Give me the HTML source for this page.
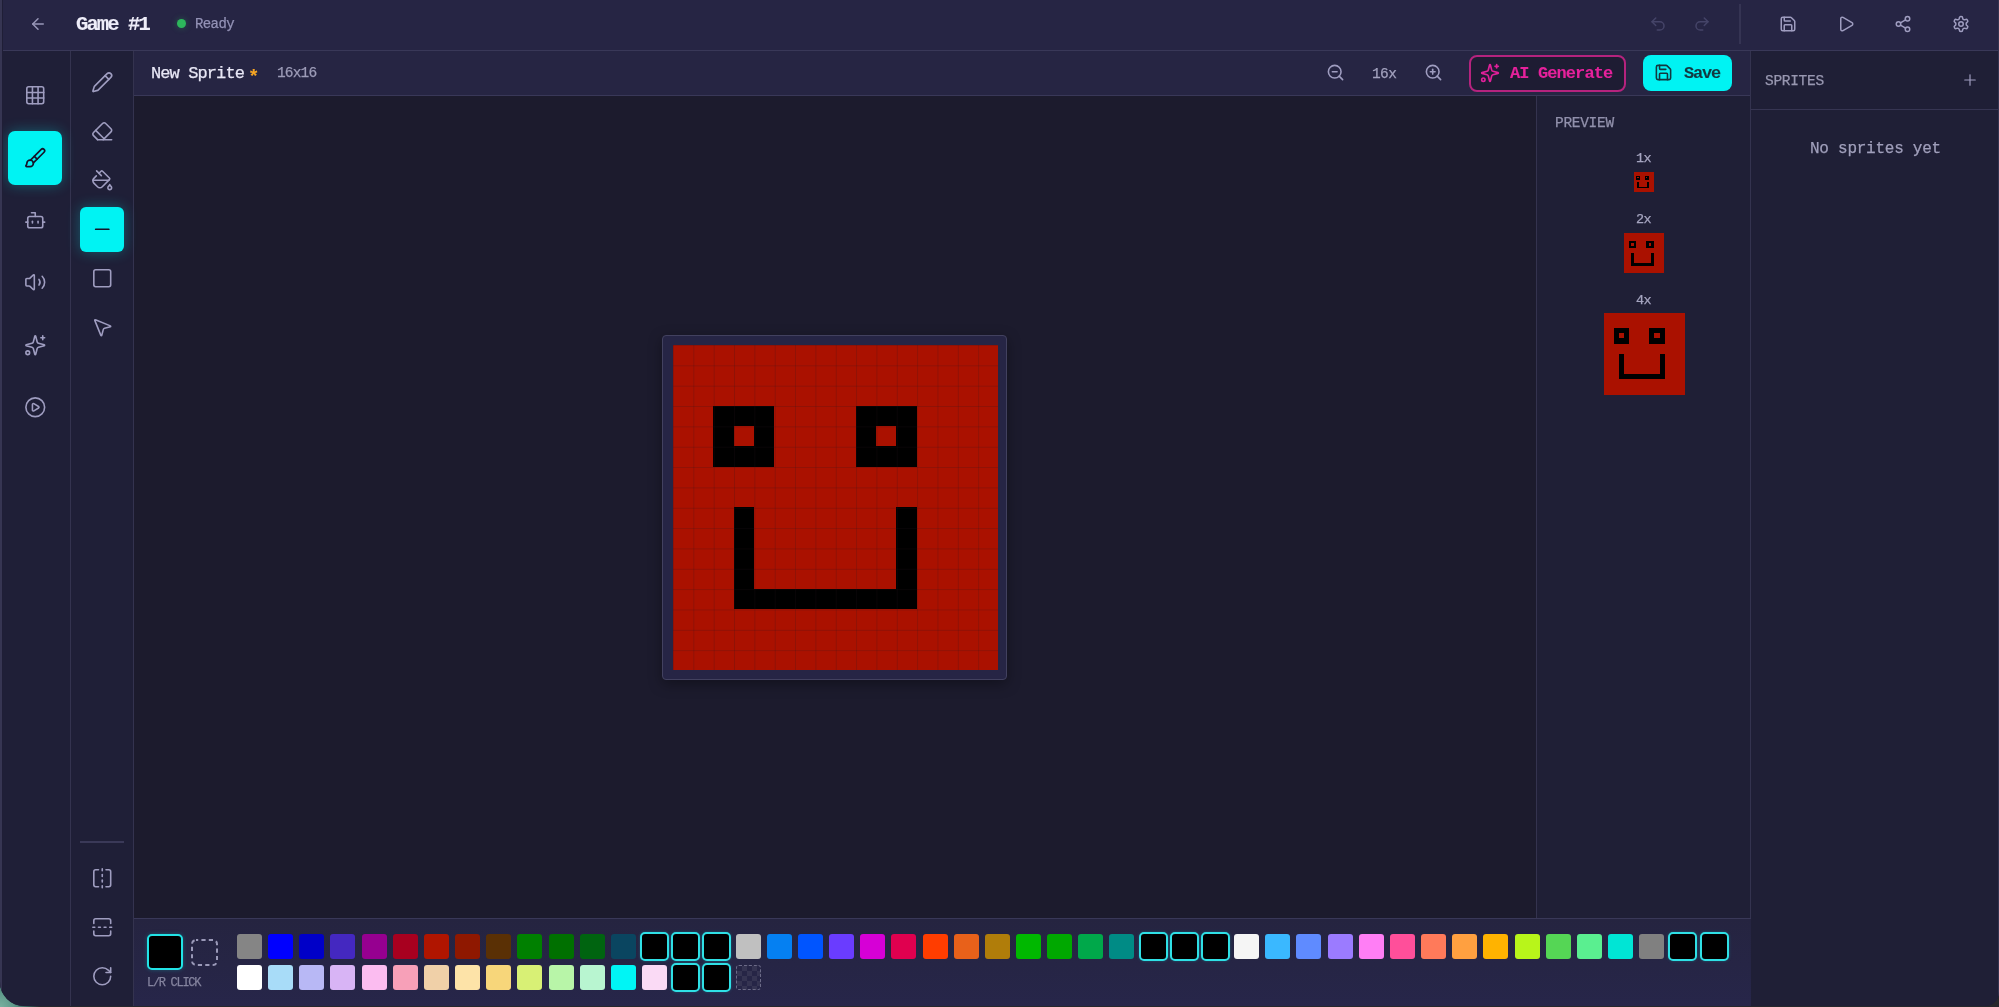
<!DOCTYPE html>
<html><head><meta charset="utf-8">
<style>
*{box-sizing:border-box;margin:0;padding:0}
html,body{width:1999px;height:1007px;overflow:hidden;background:#26272b}
#wall{left:0;top:940px;width:40px;height:67px;background:radial-gradient(circle at 0 100%,#78b09f 0,#5e998a 14px,#2f514d 30px,#26272b 40px)}
body{font-family:"Liberation Mono",monospace;position:relative}
.a{position:absolute}
svg.i{position:absolute;fill:none;stroke:currentColor;stroke-linecap:round;stroke-linejoin:round;stroke-width:2;overflow:visible}
.t{position:absolute;white-space:pre;line-height:1;will-change:transform}
#win{left:0;top:0;width:1999px;height:1006px;background:#1f1f37;border-radius:0 0 14px 24px;overflow:hidden}
#top{left:0;top:0;width:1999px;height:51px;background:#262544;border-bottom:1px solid #393858}
#side1{left:0;top:51px;width:71px;height:960px;background:#1f1f37;border-right:1px solid #34334f}
#side2{left:71px;top:51px;width:63px;height:960px;background:#1f1f37;border-right:1px solid #34334f}
#hdr{left:134px;top:51px;width:1617px;height:45px;background:#262543;border-bottom:1px solid #393858}
#canvas{left:134px;top:96px;width:1402px;height:822px;background:#1c1b2d}
#preview{left:1536px;top:96px;width:215px;height:822px;background:#1f1f36;border-left:1px solid #34334f}
#right{left:1750px;top:51px;width:249px;height:960px;background:#1f1f36;border-left:1px solid #34334f}
#pal{left:134px;top:918px;width:1617px;height:92px;background:linear-gradient(#252440,#27264a);border-top:1px solid #393858}
.sw{position:absolute;width:25px;height:25px;border-radius:3px}
.sel{outline:none;border:2px solid #2fe0e6;box-shadow:0 0 3px rgba(0,240,240,.25)}
</style></head><body>
<div id="wall" class="a"></div>
<div id="win" class="a">
<div id="top" class="a"></div>
<div id="side1" class="a"></div>
<div id="side2" class="a"></div>
<div id="hdr" class="a"></div>
<div id="canvas" class="a"></div>
<div id="preview" class="a"></div>
<div id="right" class="a"></div>
<div id="pal" class="a"></div>

<svg class="i" style="left:28.50px;top:14.50px;width:18px;height:18px;color:#9897b8;stroke-width:2" viewBox="0 0 24 24"><path d="m12 19-7-7 7-7"/><path d="M19 12H5"/></svg>
<div class="t " style="left:76.30px;top:14.59px;font-size:20.5px;color:#eeedf9;font-weight:700;letter-spacing:-1.9px;-webkit-text-stroke:0.1px #eeedf9">Game #1</div>
<div class="a" style="left:176.5px;top:18.5px;width:9px;height:9px;border-radius:50%;background:#2db75c;box-shadow:0 0 6px rgba(46,197,94,.35)"></div>
<div class="t " style="left:194.60px;top:16.87px;font-size:14px;color:#9392b6;font-weight:400;letter-spacing:-0.6px;-webkit-text-stroke:0.25px #9392b6">Ready</div>
<svg class="i" style="left:1648.50px;top:14.50px;width:18px;height:18px;color:#454468;stroke-width:2" viewBox="0 0 24 24"><path d="M9 14 4 9l5-5"/><path d="M4 9h10.5a5.5 5.5 0 0 1 5.5 5.5a5.5 5.5 0 0 1-5.5 5.5H11"/></svg>
<svg class="i" style="left:1692.50px;top:14.50px;width:18px;height:18px;color:#454468;stroke-width:2" viewBox="0 0 24 24"><path d="m15 14 5-5-5-5"/><path d="M20 9H9.5A5.5 5.5 0 0 0 4 14.5A5.5 5.5 0 0 0 9.5 20H13"/></svg>
<div class="a" style="left:1739px;top:4px;width:1.5px;height:40px;background:#353453"></div>
<svg class="i" style="left:1778.50px;top:14.50px;width:18px;height:18px;color:#9f9dc0;stroke-width:2" viewBox="0 0 24 24"><path d="M15.2 3a2 2 0 0 1 1.4.6l3.8 3.8a2 2 0 0 1 .6 1.4V19a2 2 0 0 1-2 2H5a2 2 0 0 1-2-2V5a2 2 0 0 1 2-2z"/><path d="M17 21v-7a1 1 0 0 0-1-1H8a1 1 0 0 0-1 1v7"/><path d="M7 3v4a1 1 0 0 0 1 1h7"/></svg>
<svg class="i" style="left:1836.50px;top:14.50px;width:18px;height:18px;color:#9f9dc0;stroke-width:2" viewBox="0 0 24 24"><path d="M5 5a2 2 0 0 1 3.008-1.728l11.997 6.998a2 2 0 0 1 .003 3.458l-12 7A2 2 0 0 1 5 19z"/></svg>
<svg class="i" style="left:1894.00px;top:14.50px;width:18px;height:18px;color:#9f9dc0;stroke-width:2" viewBox="0 0 24 24"><circle cx="18" cy="5" r="3"/><circle cx="6" cy="12" r="3"/><circle cx="18" cy="19" r="3"/><line x1="8.59" x2="15.42" y1="13.51" y2="17.49"/><line x1="15.41" x2="8.59" y1="6.51" y2="10.49"/></svg>
<svg class="i" style="left:1952.00px;top:14.50px;width:18px;height:18px;color:#9f9dc0;stroke-width:2" viewBox="0 0 24 24"><path d="M12.22 2h-.44a2 2 0 0 0-2 2v.18a2 2 0 0 1-1 1.73l-.43.25a2 2 0 0 1-2 0l-.15-.08a2 2 0 0 0-2.73.73l-.22.38a2 2 0 0 0 .73 2.73l.15.1a2 2 0 0 1 1 1.72v.51a2 2 0 0 1-1 1.74l-.15.09a2 2 0 0 0-.73 2.73l.22.38a2 2 0 0 0 2.73.73l.15-.08a2 2 0 0 1 2 0l.43.25a2 2 0 0 1 1 1.73V20a2 2 0 0 0 2 2h.44a2 2 0 0 0 2-2v-.18a2 2 0 0 1 1-1.73l.43-.25a2 2 0 0 1 2 0l.15.08a2 2 0 0 0 2.73-.73l.22-.39a2 2 0 0 0-.73-2.73l-.15-.08a2 2 0 0 1-1-1.74v-.5a2 2 0 0 1 1-1.74l.15-.09a2 2 0 0 0 .73-2.73l-.22-.38a2 2 0 0 0-2.73-.73l-.15.08a2 2 0 0 1-2 0l-.43-.25a2 2 0 0 1-1-1.73V4a2 2 0 0 0-2-2z"/><circle cx="12" cy="12" r="3"/></svg>
<div class="a" style="left:8px;top:131px;width:54px;height:54px;border-radius:7px;background:#00f3f3;box-shadow:0 0 14px rgba(0,240,240,.3)"></div>
<svg class="i" style="left:23.75px;top:84.25px;width:22.5px;height:22.5px;color:#9f9dc0;stroke-width:1.7" viewBox="0 0 24 24"><rect width="18" height="18" x="3" y="3" rx="2"/><path d="M3 9h18"/><path d="M3 15h18"/><path d="M9 3v18"/><path d="M15 3v18"/></svg>
<svg class="i" style="left:23.75px;top:146.75px;width:22.5px;height:22.5px;color:#15152a;stroke-width:1.8" viewBox="0 0 24 24"><path d="m11 10 3 3"/><path d="M6.5 21A3.5 3.5 0 1 0 3 17.5a2.62 2.62 0 0 1-.708 1.792A1 1 0 0 0 3 21z"/><path d="M9.969 17.031 21.378 5.624a1 1 0 0 0-3.002-3.002L6.967 14.031"/></svg>
<svg class="i" style="left:23.75px;top:209.15px;width:22.5px;height:22.5px;color:#9f9dc0;stroke-width:1.7" viewBox="0 0 24 24"><path d="M12 8V4H8"/><rect width="16" height="12" x="4" y="8" rx="2"/><path d="M2 14h2"/><path d="M20 14h2"/><path d="M15 13v2"/><path d="M9 13v2"/></svg>
<svg class="i" style="left:23.75px;top:270.75px;width:22.5px;height:22.5px;color:#9f9dc0;stroke-width:1.7" viewBox="0 0 24 24"><path d="M11 4.702a.705.705 0 0 0-1.203-.498L6.413 7.587A1.4 1.4 0 0 1 5.416 8H3a1 1 0 0 0-1 1v6a1 1 0 0 0 1 1h2.416a1.4 1.4 0 0 1 .997.413l3.383 3.384A.705.705 0 0 0 11 19.298z"/><path d="M16 9a5 5 0 0 1 0 6"/><path d="M19.364 18.364a9 9 0 0 0 0-12.728"/></svg>
<svg class="i" style="left:23.75px;top:333.75px;width:22.5px;height:22.5px;color:#9f9dc0;stroke-width:1.7" viewBox="0 0 24 24"><path d="M9.937 15.5A2 2 0 0 0 8.5 14.063l-6.135-1.582a.5.5 0 0 1 0-.962L8.5 9.936A2 2 0 0 0 9.937 8.5l1.582-6.135a.5.5 0 0 1 .963 0L14.063 8.5A2 2 0 0 0 15.5 9.937l6.135 1.581a.5.5 0 0 1 0 .964L15.5 14.063a2 2 0 0 0-1.437 1.437l-1.582 6.135a.5.5 0 0 1-.963 0z"/><path d="M20 2v4"/><path d="M22 4h-4"/><circle cx="4" cy="20" r="2"/></svg>
<svg class="i" style="left:23.75px;top:396.25px;width:22.5px;height:22.5px;color:#9f9dc0;stroke-width:1.7" viewBox="0 0 24 24"><circle cx="12" cy="12" r="10"/><path d="M9 9.003a1 1 0 0 1 1.517-.859l4.997 2.997a1 1 0 0 1 0 1.718l-4.997 2.997A1 1 0 0 1 9 14.996z"/></svg>
<div class="a" style="left:80px;top:207px;width:44px;height:45px;border-radius:6px;background:#00f3f3;box-shadow:0 0 14px rgba(0,240,240,.3)"></div>
<svg class="i" style="left:90.75px;top:70.75px;width:22.5px;height:22.5px;color:#9f9dc0;stroke-width:1.7" viewBox="0 0 24 24"><path d="M21.174 6.812a1 1 0 0 0-3.986-3.987L3.842 16.174a2 2 0 0 0-.5.83l-1.321 4.352a.5.5 0 0 0 .623.622l4.353-1.32a2 2 0 0 0 .83-.497z"/><path d="m15 5 4 4"/></svg>
<svg class="i" style="left:90.75px;top:120.25px;width:22.5px;height:22.5px;color:#9f9dc0;stroke-width:1.7" viewBox="0 0 24 24"><path d="m7 21-4.3-4.3c-1-1-1-2.5 0-3.4l9.6-9.6c1-1 2.5-1 3.4 0l5.6 5.6c1 1 1 2.5 0 3.4L13 21"/><path d="M22 21H7"/><path d="m5 11 9 9"/></svg>
<svg class="i" style="left:90.75px;top:168.75px;width:22.5px;height:22.5px;color:#9f9dc0;stroke-width:1.7" viewBox="0 0 24 24"><path d="M11 7 6 2"/><path d="M18.992 12H2.041"/><path d="M21.145 18.38A3.34 3.34 0 0 1 20 16.5a3.3 3.3 0 0 1-1.145 1.88c-.575.46-.855 1.02-.855 1.595A2 2 0 0 0 20 22a2 2 0 0 0 2-2.025c0-.58-.285-1.13-.855-1.595"/><path d="m8.5 4.5 2.148-2.148a1.205 1.205 0 0 1 1.704 0l7.296 7.296a1.205 1.205 0 0 1 0 1.704l-7.592 7.592a3.615 3.615 0 0 1-5.112 0l-3.888-3.888a3.615 3.615 0 0 1 0-5.112L5.67 7.33"/></svg>
<svg class="i" style="left:90.75px;top:218.25px;width:22.5px;height:22.5px;color:#15152a;stroke-width:1.8" viewBox="0 0 24 24"><path d="M5 12h14"/></svg>
<svg class="i" style="left:90.75px;top:266.75px;width:22.5px;height:22.5px;color:#9f9dc0;stroke-width:1.7" viewBox="0 0 24 24"><rect width="18" height="18" x="3" y="3" rx="2"/></svg>
<svg class="i" style="left:90.75px;top:315.75px;width:22.5px;height:22.5px;color:#9f9dc0;stroke-width:1.7" viewBox="0 0 24 24"><path d="M4.037 4.688a.495.495 0 0 1 .651-.651l16 6.5a.5.5 0 0 1-.063.947l-6.124 1.58a2 2 0 0 0-1.438 1.435l-1.579 6.126a.5.5 0 0 1-.947.063z"/></svg>
<div class="a" style="left:80px;top:841px;width:44px;height:2px;background:#3a3958"></div>
<svg class="i" style="left:90.75px;top:867.25px;width:22.5px;height:22.5px;color:#9f9dc0;stroke-width:1.7" viewBox="0 0 24 24"><path d="M8 3H5a2 2 0 0 0-2 2v14c0 1.1.9 2 2 2h3"/><path d="M16 3h3a2 2 0 0 1 2 2v14a2 2 0 0 1-2 2h-3"/><path d="M12 20v2"/><path d="M12 14v2"/><path d="M12 8v2"/><path d="M12 2v2"/></svg>
<svg class="i" style="left:90.75px;top:915.75px;width:22.5px;height:22.5px;color:#9f9dc0;stroke-width:1.7" viewBox="0 0 24 24"><path d="M21 8V5a2 2 0 0 0-2-2H5a2 2 0 0 0-2 2v3"/><path d="M21 16v3a2 2 0 0 1-2 2H5a2 2 0 0 1-2-2v-3"/><path d="M4 12H2"/><path d="M10 12H8"/><path d="M16 12h-2"/><path d="M22 12h-2"/></svg>
<svg class="i" style="left:90.75px;top:964.75px;width:22.5px;height:22.5px;color:#9f9dc0;stroke-width:1.7" viewBox="0 0 24 24"><path d="M21 12a9 9 0 1 1-9-9c2.52 0 4.93 1 6.74 2.74L21 8"/><path d="M21 3v5h-5"/></svg>
<div class="t " style="left:151.00px;top:64.78px;font-size:17px;color:#e8e7f6;font-weight:400;letter-spacing:-0.9px;-webkit-text-stroke:0.25px #e8e7f6">New Sprite</div>
<div class="t " style="left:248.00px;top:67.94px;font-size:19px;color:#f5a524;font-weight:700;letter-spacing:0px;-webkit-text-stroke:0.1px #f5a524">*</div>
<div class="t " style="left:277.00px;top:66.39px;font-size:14.5px;color:#9d9cb8;font-weight:400;letter-spacing:-0.85px;-webkit-text-stroke:0.25px #9d9cb8">16x16</div>
<svg class="i" style="left:1325.50px;top:63.00px;width:19px;height:19px;color:#9f9dc0;stroke-width:2" viewBox="0 0 24 24"><circle cx="11" cy="11" r="8"/><line x1="21" x2="16.65" y1="21" y2="16.65"/><line x1="8" x2="14" y1="11" y2="11"/></svg>
<div class="t " style="left:1372.00px;top:66.69px;font-size:14.5px;color:#a2a1bd;font-weight:400;letter-spacing:-0.6px;-webkit-text-stroke:0.25px #a2a1bd">16x</div>
<svg class="i" style="left:1424.00px;top:63.00px;width:19px;height:19px;color:#9f9dc0;stroke-width:2" viewBox="0 0 24 24"><circle cx="11" cy="11" r="8"/><line x1="21" x2="16.65" y1="21" y2="16.65"/><line x1="11" x2="11" y1="8" y2="14"/><line x1="8" x2="14" y1="11" y2="11"/></svg>
<div class="a" style="left:1469px;top:55px;width:157px;height:37px;border-radius:8px;background:#1e1c33;border:2px solid #b5237e"></div>
<svg class="i" style="left:1480.00px;top:62.50px;width:20px;height:20px;color:#e0209a;stroke-width:2" viewBox="0 0 24 24"><path d="M9.937 15.5A2 2 0 0 0 8.5 14.063l-6.135-1.582a.5.5 0 0 1 0-.962L8.5 9.936A2 2 0 0 0 9.937 8.5l1.582-6.135a.5.5 0 0 1 .963 0L14.063 8.5A2 2 0 0 0 15.5 9.937l6.135 1.581a.5.5 0 0 1 0 .964L15.5 14.063a2 2 0 0 0-1.437 1.437l-1.582 6.135a.5.5 0 0 1-.963 0z"/><path d="M20 2v4"/><path d="M22 4h-4"/><circle cx="4" cy="20" r="2"/></svg>
<div class="t " style="left:1510.00px;top:64.88px;font-size:17px;color:#e6219c;font-weight:700;letter-spacing:-0.9px;-webkit-text-stroke:0.1px #e6219c">AI Generate</div>
<div class="a" style="left:1643px;top:55px;width:89px;height:36px;border-radius:8px;background:#00f3f3"></div>
<svg class="i" style="left:1653.50px;top:63.00px;width:19px;height:19px;color:#133840;stroke-width:2" viewBox="0 0 24 24"><path d="M15.2 3a2 2 0 0 1 1.4.6l3.8 3.8a2 2 0 0 1 .6 1.4V19a2 2 0 0 1-2 2H5a2 2 0 0 1-2-2V5a2 2 0 0 1 2-2z"/><path d="M17 21v-7a1 1 0 0 0-1-1H8a1 1 0 0 0-1 1v7"/><path d="M7 3v4a1 1 0 0 0 1 1h7"/></svg>
<div class="t " style="left:1683.50px;top:64.88px;font-size:17px;color:#133840;font-weight:700;letter-spacing:-1.2px;-webkit-text-stroke:0.1px #133840">Save</div>
<div class="a" style="left:662px;top:335px;width:345px;height:345px;border-radius:4px;background:#262545;border:1px solid #42415f;box-shadow:0 4px 14px rgba(0,0,0,.35)"></div>
<div class="a" style="left:672.5px;top:344.5px;width:325.5px;height:325.5px;background:#aa1100;overflow:hidden"><div class="a" style="left:40.688px;top:61.031px;width:20.364px;height:20.364px;background:#000"></div><div class="a" style="left:40.688px;top:81.375px;width:20.364px;height:20.364px;background:#000"></div><div class="a" style="left:40.688px;top:101.719px;width:20.364px;height:20.364px;background:#000"></div><div class="a" style="left:61.031px;top:61.031px;width:20.364px;height:20.364px;background:#000"></div><div class="a" style="left:61.031px;top:101.719px;width:20.364px;height:20.364px;background:#000"></div><div class="a" style="left:61.031px;top:162.750px;width:20.364px;height:20.364px;background:#000"></div><div class="a" style="left:61.031px;top:183.094px;width:20.364px;height:20.364px;background:#000"></div><div class="a" style="left:61.031px;top:203.438px;width:20.364px;height:20.364px;background:#000"></div><div class="a" style="left:61.031px;top:223.781px;width:20.364px;height:20.364px;background:#000"></div><div class="a" style="left:61.031px;top:244.125px;width:20.364px;height:20.364px;background:#000"></div><div class="a" style="left:81.375px;top:61.031px;width:20.364px;height:20.364px;background:#000"></div><div class="a" style="left:81.375px;top:81.375px;width:20.364px;height:20.364px;background:#000"></div><div class="a" style="left:81.375px;top:101.719px;width:20.364px;height:20.364px;background:#000"></div><div class="a" style="left:81.375px;top:244.125px;width:20.364px;height:20.364px;background:#000"></div><div class="a" style="left:101.719px;top:244.125px;width:20.364px;height:20.364px;background:#000"></div><div class="a" style="left:122.062px;top:244.125px;width:20.364px;height:20.364px;background:#000"></div><div class="a" style="left:142.406px;top:244.125px;width:20.364px;height:20.364px;background:#000"></div><div class="a" style="left:162.750px;top:244.125px;width:20.364px;height:20.364px;background:#000"></div><div class="a" style="left:183.094px;top:61.031px;width:20.364px;height:20.364px;background:#000"></div><div class="a" style="left:183.094px;top:81.375px;width:20.364px;height:20.364px;background:#000"></div><div class="a" style="left:183.094px;top:101.719px;width:20.364px;height:20.364px;background:#000"></div><div class="a" style="left:183.094px;top:244.125px;width:20.364px;height:20.364px;background:#000"></div><div class="a" style="left:203.438px;top:61.031px;width:20.364px;height:20.364px;background:#000"></div><div class="a" style="left:203.438px;top:101.719px;width:20.364px;height:20.364px;background:#000"></div><div class="a" style="left:203.438px;top:244.125px;width:20.364px;height:20.364px;background:#000"></div><div class="a" style="left:223.781px;top:61.031px;width:20.364px;height:20.364px;background:#000"></div><div class="a" style="left:223.781px;top:81.375px;width:20.364px;height:20.364px;background:#000"></div><div class="a" style="left:223.781px;top:101.719px;width:20.364px;height:20.364px;background:#000"></div><div class="a" style="left:223.781px;top:162.750px;width:20.364px;height:20.364px;background:#000"></div><div class="a" style="left:223.781px;top:183.094px;width:20.364px;height:20.364px;background:#000"></div><div class="a" style="left:223.781px;top:203.438px;width:20.364px;height:20.364px;background:#000"></div><div class="a" style="left:223.781px;top:223.781px;width:20.364px;height:20.364px;background:#000"></div><div class="a" style="left:223.781px;top:244.125px;width:20.364px;height:20.364px;background:#000"></div><div class="a" style="left:0;top:0;width:325.5px;height:325.5px;background-image:linear-gradient(to right, rgba(40,20,30,.2) 1px, transparent 1px),linear-gradient(to bottom, rgba(40,20,30,.2) 1px, transparent 1px);background-size:20.34375px 20.34375px"></div></div>
<div class="t " style="left:1555.00px;top:116.19px;font-size:14.5px;color:#9291ac;font-weight:400;letter-spacing:-0.3px;-webkit-text-stroke:0.25px #9291ac">PREVIEW</div>
<div class="t " style="left:1636.00px;top:152.16px;font-size:13.5px;color:#a6a5c0;font-weight:400;letter-spacing:-0.6px;-webkit-text-stroke:0.25px #a6a5c0">1x</div>
<div class="a" style="left:1633.5px;top:172px;width:20px;height:20px;background:#aa1100;overflow:hidden"><div class="a" style="left:2.500px;top:3.750px;width:1.270px;height:1.270px;background:#000"></div><div class="a" style="left:2.500px;top:5.000px;width:1.270px;height:1.270px;background:#000"></div><div class="a" style="left:2.500px;top:6.250px;width:1.270px;height:1.270px;background:#000"></div><div class="a" style="left:3.750px;top:3.750px;width:1.270px;height:1.270px;background:#000"></div><div class="a" style="left:3.750px;top:6.250px;width:1.270px;height:1.270px;background:#000"></div><div class="a" style="left:3.750px;top:10.000px;width:1.270px;height:1.270px;background:#000"></div><div class="a" style="left:3.750px;top:11.250px;width:1.270px;height:1.270px;background:#000"></div><div class="a" style="left:3.750px;top:12.500px;width:1.270px;height:1.270px;background:#000"></div><div class="a" style="left:3.750px;top:13.750px;width:1.270px;height:1.270px;background:#000"></div><div class="a" style="left:3.750px;top:15.000px;width:1.270px;height:1.270px;background:#000"></div><div class="a" style="left:5.000px;top:3.750px;width:1.270px;height:1.270px;background:#000"></div><div class="a" style="left:5.000px;top:5.000px;width:1.270px;height:1.270px;background:#000"></div><div class="a" style="left:5.000px;top:6.250px;width:1.270px;height:1.270px;background:#000"></div><div class="a" style="left:5.000px;top:15.000px;width:1.270px;height:1.270px;background:#000"></div><div class="a" style="left:6.250px;top:15.000px;width:1.270px;height:1.270px;background:#000"></div><div class="a" style="left:7.500px;top:15.000px;width:1.270px;height:1.270px;background:#000"></div><div class="a" style="left:8.750px;top:15.000px;width:1.270px;height:1.270px;background:#000"></div><div class="a" style="left:10.000px;top:15.000px;width:1.270px;height:1.270px;background:#000"></div><div class="a" style="left:11.250px;top:3.750px;width:1.270px;height:1.270px;background:#000"></div><div class="a" style="left:11.250px;top:5.000px;width:1.270px;height:1.270px;background:#000"></div><div class="a" style="left:11.250px;top:6.250px;width:1.270px;height:1.270px;background:#000"></div><div class="a" style="left:11.250px;top:15.000px;width:1.270px;height:1.270px;background:#000"></div><div class="a" style="left:12.500px;top:3.750px;width:1.270px;height:1.270px;background:#000"></div><div class="a" style="left:12.500px;top:6.250px;width:1.270px;height:1.270px;background:#000"></div><div class="a" style="left:12.500px;top:15.000px;width:1.270px;height:1.270px;background:#000"></div><div class="a" style="left:13.750px;top:3.750px;width:1.270px;height:1.270px;background:#000"></div><div class="a" style="left:13.750px;top:5.000px;width:1.270px;height:1.270px;background:#000"></div><div class="a" style="left:13.750px;top:6.250px;width:1.270px;height:1.270px;background:#000"></div><div class="a" style="left:13.750px;top:10.000px;width:1.270px;height:1.270px;background:#000"></div><div class="a" style="left:13.750px;top:11.250px;width:1.270px;height:1.270px;background:#000"></div><div class="a" style="left:13.750px;top:12.500px;width:1.270px;height:1.270px;background:#000"></div><div class="a" style="left:13.750px;top:13.750px;width:1.270px;height:1.270px;background:#000"></div><div class="a" style="left:13.750px;top:15.000px;width:1.270px;height:1.270px;background:#000"></div></div>
<div class="t " style="left:1636.00px;top:212.96px;font-size:13.5px;color:#a6a5c0;font-weight:400;letter-spacing:-0.6px;-webkit-text-stroke:0.25px #a6a5c0">2x</div>
<div class="a" style="left:1623.5px;top:233px;width:40px;height:40px;background:#aa1100;overflow:hidden"><div class="a" style="left:5.000px;top:7.500px;width:2.520px;height:2.520px;background:#000"></div><div class="a" style="left:5.000px;top:10.000px;width:2.520px;height:2.520px;background:#000"></div><div class="a" style="left:5.000px;top:12.500px;width:2.520px;height:2.520px;background:#000"></div><div class="a" style="left:7.500px;top:7.500px;width:2.520px;height:2.520px;background:#000"></div><div class="a" style="left:7.500px;top:12.500px;width:2.520px;height:2.520px;background:#000"></div><div class="a" style="left:7.500px;top:20.000px;width:2.520px;height:2.520px;background:#000"></div><div class="a" style="left:7.500px;top:22.500px;width:2.520px;height:2.520px;background:#000"></div><div class="a" style="left:7.500px;top:25.000px;width:2.520px;height:2.520px;background:#000"></div><div class="a" style="left:7.500px;top:27.500px;width:2.520px;height:2.520px;background:#000"></div><div class="a" style="left:7.500px;top:30.000px;width:2.520px;height:2.520px;background:#000"></div><div class="a" style="left:10.000px;top:7.500px;width:2.520px;height:2.520px;background:#000"></div><div class="a" style="left:10.000px;top:10.000px;width:2.520px;height:2.520px;background:#000"></div><div class="a" style="left:10.000px;top:12.500px;width:2.520px;height:2.520px;background:#000"></div><div class="a" style="left:10.000px;top:30.000px;width:2.520px;height:2.520px;background:#000"></div><div class="a" style="left:12.500px;top:30.000px;width:2.520px;height:2.520px;background:#000"></div><div class="a" style="left:15.000px;top:30.000px;width:2.520px;height:2.520px;background:#000"></div><div class="a" style="left:17.500px;top:30.000px;width:2.520px;height:2.520px;background:#000"></div><div class="a" style="left:20.000px;top:30.000px;width:2.520px;height:2.520px;background:#000"></div><div class="a" style="left:22.500px;top:7.500px;width:2.520px;height:2.520px;background:#000"></div><div class="a" style="left:22.500px;top:10.000px;width:2.520px;height:2.520px;background:#000"></div><div class="a" style="left:22.500px;top:12.500px;width:2.520px;height:2.520px;background:#000"></div><div class="a" style="left:22.500px;top:30.000px;width:2.520px;height:2.520px;background:#000"></div><div class="a" style="left:25.000px;top:7.500px;width:2.520px;height:2.520px;background:#000"></div><div class="a" style="left:25.000px;top:12.500px;width:2.520px;height:2.520px;background:#000"></div><div class="a" style="left:25.000px;top:30.000px;width:2.520px;height:2.520px;background:#000"></div><div class="a" style="left:27.500px;top:7.500px;width:2.520px;height:2.520px;background:#000"></div><div class="a" style="left:27.500px;top:10.000px;width:2.520px;height:2.520px;background:#000"></div><div class="a" style="left:27.500px;top:12.500px;width:2.520px;height:2.520px;background:#000"></div><div class="a" style="left:27.500px;top:20.000px;width:2.520px;height:2.520px;background:#000"></div><div class="a" style="left:27.500px;top:22.500px;width:2.520px;height:2.520px;background:#000"></div><div class="a" style="left:27.500px;top:25.000px;width:2.520px;height:2.520px;background:#000"></div><div class="a" style="left:27.500px;top:27.500px;width:2.520px;height:2.520px;background:#000"></div><div class="a" style="left:27.500px;top:30.000px;width:2.520px;height:2.520px;background:#000"></div></div>
<div class="t " style="left:1636.00px;top:293.66px;font-size:13.5px;color:#a6a5c0;font-weight:400;letter-spacing:-0.6px;-webkit-text-stroke:0.25px #a6a5c0">4x</div>
<div class="a" style="left:1603.5px;top:313px;width:81.5px;height:81.5px;background:#aa1100;overflow:hidden"><div class="a" style="left:10.188px;top:15.281px;width:5.114px;height:5.114px;background:#000"></div><div class="a" style="left:10.188px;top:20.375px;width:5.114px;height:5.114px;background:#000"></div><div class="a" style="left:10.188px;top:25.469px;width:5.114px;height:5.114px;background:#000"></div><div class="a" style="left:15.281px;top:15.281px;width:5.114px;height:5.114px;background:#000"></div><div class="a" style="left:15.281px;top:25.469px;width:5.114px;height:5.114px;background:#000"></div><div class="a" style="left:15.281px;top:40.750px;width:5.114px;height:5.114px;background:#000"></div><div class="a" style="left:15.281px;top:45.844px;width:5.114px;height:5.114px;background:#000"></div><div class="a" style="left:15.281px;top:50.938px;width:5.114px;height:5.114px;background:#000"></div><div class="a" style="left:15.281px;top:56.031px;width:5.114px;height:5.114px;background:#000"></div><div class="a" style="left:15.281px;top:61.125px;width:5.114px;height:5.114px;background:#000"></div><div class="a" style="left:20.375px;top:15.281px;width:5.114px;height:5.114px;background:#000"></div><div class="a" style="left:20.375px;top:20.375px;width:5.114px;height:5.114px;background:#000"></div><div class="a" style="left:20.375px;top:25.469px;width:5.114px;height:5.114px;background:#000"></div><div class="a" style="left:20.375px;top:61.125px;width:5.114px;height:5.114px;background:#000"></div><div class="a" style="left:25.469px;top:61.125px;width:5.114px;height:5.114px;background:#000"></div><div class="a" style="left:30.562px;top:61.125px;width:5.114px;height:5.114px;background:#000"></div><div class="a" style="left:35.656px;top:61.125px;width:5.114px;height:5.114px;background:#000"></div><div class="a" style="left:40.750px;top:61.125px;width:5.114px;height:5.114px;background:#000"></div><div class="a" style="left:45.844px;top:15.281px;width:5.114px;height:5.114px;background:#000"></div><div class="a" style="left:45.844px;top:20.375px;width:5.114px;height:5.114px;background:#000"></div><div class="a" style="left:45.844px;top:25.469px;width:5.114px;height:5.114px;background:#000"></div><div class="a" style="left:45.844px;top:61.125px;width:5.114px;height:5.114px;background:#000"></div><div class="a" style="left:50.938px;top:15.281px;width:5.114px;height:5.114px;background:#000"></div><div class="a" style="left:50.938px;top:25.469px;width:5.114px;height:5.114px;background:#000"></div><div class="a" style="left:50.938px;top:61.125px;width:5.114px;height:5.114px;background:#000"></div><div class="a" style="left:56.031px;top:15.281px;width:5.114px;height:5.114px;background:#000"></div><div class="a" style="left:56.031px;top:20.375px;width:5.114px;height:5.114px;background:#000"></div><div class="a" style="left:56.031px;top:25.469px;width:5.114px;height:5.114px;background:#000"></div><div class="a" style="left:56.031px;top:40.750px;width:5.114px;height:5.114px;background:#000"></div><div class="a" style="left:56.031px;top:45.844px;width:5.114px;height:5.114px;background:#000"></div><div class="a" style="left:56.031px;top:50.938px;width:5.114px;height:5.114px;background:#000"></div><div class="a" style="left:56.031px;top:56.031px;width:5.114px;height:5.114px;background:#000"></div><div class="a" style="left:56.031px;top:61.125px;width:5.114px;height:5.114px;background:#000"></div></div>
<div class="t " style="left:1764.50px;top:73.69px;font-size:14.5px;color:#9897b0;font-weight:400;letter-spacing:-0.3px;-webkit-text-stroke:0.25px #9897b0">SPRITES</div>
<svg class="i" style="left:1961.30px;top:71.20px;width:18px;height:18px;color:#9f9dc0;stroke-width:1.6" viewBox="0 0 24 24"><path d="M5 12h14"/><path d="M12 5v14"/></svg>
<div class="a" style="left:1751px;top:108.6px;width:248px;height:1px;background:#363552"></div>
<div class="t " style="left:1809.50px;top:141.44px;font-size:16px;color:#a09fbb;font-weight:400;letter-spacing:-0.25px;-webkit-text-stroke:0.25px #a09fbb">No sprites yet</div>
<div class="a" style="left:147px;top:934px;width:36px;height:36px;border-radius:5px;background:#000;border:2.5px solid #22e3e6;box-shadow:0 0 4px rgba(0,240,240,.25)"></div>
<svg class="a" style="left:191px;top:938.6px;width:27px;height:27px" viewBox="0 0 27 27"><rect x="1" y="1" width="25" height="25" rx="4" fill="none" stroke="#9a99b8" stroke-width="2" stroke-dasharray="4.2 3.2" stroke-dashoffset="2"/></svg>
<div class="t " style="left:147.00px;top:977.01px;font-size:12px;color:#85849f;font-weight:400;letter-spacing:-1.3px;-webkit-text-stroke:0.25px #85849f">L/R CLICK</div>
<div class="sw" style="left:237.00px;top:933.80px;background:#858585"></div>
<div class="sw" style="left:268.16px;top:933.80px;background:#0000ff"></div>
<div class="sw" style="left:299.32px;top:933.80px;background:#0000c8"></div>
<div class="sw" style="left:330.48px;top:933.80px;background:#4428c0"></div>
<div class="sw" style="left:361.64px;top:933.80px;background:#960090"></div>
<div class="sw" style="left:392.80px;top:933.80px;background:#a8001f"></div>
<div class="sw" style="left:423.96px;top:933.80px;background:#b01500"></div>
<div class="sw" style="left:455.12px;top:933.80px;background:#8f1800"></div>
<div class="sw" style="left:486.28px;top:933.80px;background:#5a3005"></div>
<div class="sw" style="left:517.44px;top:933.80px;background:#008000"></div>
<div class="sw" style="left:548.60px;top:933.80px;background:#007000"></div>
<div class="sw" style="left:579.76px;top:933.80px;background:#006410"></div>
<div class="sw" style="left:610.92px;top:933.80px;background:#0a4560"></div>
<div class="sw sel" style="left:640.08px;top:931.80px;width:29px;height:29px;background:#000;border-radius:5px"></div>
<div class="sw sel" style="left:671.24px;top:931.80px;width:29px;height:29px;background:#000;border-radius:5px"></div>
<div class="sw sel" style="left:702.40px;top:931.80px;width:29px;height:29px;background:#000;border-radius:5px"></div>
<div class="sw" style="left:735.56px;top:933.80px;background:#c0c0c0"></div>
<div class="sw" style="left:766.72px;top:933.80px;background:#0580f2"></div>
<div class="sw" style="left:797.88px;top:933.80px;background:#0055ff"></div>
<div class="sw" style="left:829.04px;top:933.80px;background:#6a3cff"></div>
<div class="sw" style="left:860.20px;top:933.80px;background:#d600d6"></div>
<div class="sw" style="left:891.36px;top:933.80px;background:#e0004f"></div>
<div class="sw" style="left:922.52px;top:933.80px;background:#ff3d00"></div>
<div class="sw" style="left:953.68px;top:933.80px;background:#e8611a"></div>
<div class="sw" style="left:984.84px;top:933.80px;background:#b07d0a"></div>
<div class="sw" style="left:1016.00px;top:933.80px;background:#00b800"></div>
<div class="sw" style="left:1047.16px;top:933.80px;background:#00a800"></div>
<div class="sw" style="left:1078.32px;top:933.80px;background:#00a84a"></div>
<div class="sw" style="left:1109.48px;top:933.80px;background:#008b85"></div>
<div class="sw sel" style="left:1138.64px;top:931.80px;width:29px;height:29px;background:#000;border-radius:5px"></div>
<div class="sw sel" style="left:1169.80px;top:931.80px;width:29px;height:29px;background:#000;border-radius:5px"></div>
<div class="sw sel" style="left:1200.96px;top:931.80px;width:29px;height:29px;background:#000;border-radius:5px"></div>
<div class="sw" style="left:1234.12px;top:933.80px;background:#f5f5f5"></div>
<div class="sw" style="left:1265.28px;top:933.80px;background:#3ab8ff"></div>
<div class="sw" style="left:1296.44px;top:933.80px;background:#5f8bff"></div>
<div class="sw" style="left:1327.60px;top:933.80px;background:#9b7bff"></div>
<div class="sw" style="left:1358.76px;top:933.80px;background:#ff7ef5"></div>
<div class="sw" style="left:1389.92px;top:933.80px;background:#ff4f9a"></div>
<div class="sw" style="left:1421.08px;top:933.80px;background:#ff7a5a"></div>
<div class="sw" style="left:1452.24px;top:933.80px;background:#ffa040"></div>
<div class="sw" style="left:1483.40px;top:933.80px;background:#ffb300"></div>
<div class="sw" style="left:1514.56px;top:933.80px;background:#b8f51a"></div>
<div class="sw" style="left:1545.72px;top:933.80px;background:#55d655"></div>
<div class="sw" style="left:1576.88px;top:933.80px;background:#5aef90"></div>
<div class="sw" style="left:1608.04px;top:933.80px;background:#00e5d5"></div>
<div class="sw" style="left:1639.20px;top:933.80px;background:#808080"></div>
<div class="sw sel" style="left:1668.36px;top:931.80px;width:29px;height:29px;background:#000;border-radius:5px"></div>
<div class="sw sel" style="left:1699.52px;top:931.80px;width:29px;height:29px;background:#000;border-radius:5px"></div>
<div class="sw" style="left:237.00px;top:965.00px;background:#ffffff"></div>
<div class="sw" style="left:268.16px;top:965.00px;background:#a8dcf8"></div>
<div class="sw" style="left:299.32px;top:965.00px;background:#b8b8f5"></div>
<div class="sw" style="left:330.48px;top:965.00px;background:#d8b4f5"></div>
<div class="sw" style="left:361.64px;top:965.00px;background:#fbbcf0"></div>
<div class="sw" style="left:392.80px;top:965.00px;background:#f7a0b8"></div>
<div class="sw" style="left:423.96px;top:965.00px;background:#f0d0a8"></div>
<div class="sw" style="left:455.12px;top:965.00px;background:#fde3a8"></div>
<div class="sw" style="left:486.28px;top:965.00px;background:#f7d67a"></div>
<div class="sw" style="left:517.44px;top:965.00px;background:#d8f075"></div>
<div class="sw" style="left:548.60px;top:965.00px;background:#b8f5a8"></div>
<div class="sw" style="left:579.76px;top:965.00px;background:#b8f5d0"></div>
<div class="sw" style="left:610.92px;top:965.00px;background:#00f5f5"></div>
<div class="sw" style="left:642.08px;top:965.00px;background:#fadaf5"></div>
<div class="sw sel" style="left:671.24px;top:963.00px;width:29px;height:29px;background:#000;border-radius:5px"></div>
<div class="sw sel" style="left:702.40px;top:963.00px;width:29px;height:29px;background:#000;border-radius:5px"></div>
<div class="sw" style="left:735.56px;top:965.00px;border:1.5px dashed #6c6b88;background-image:linear-gradient(45deg,#353452 25%,transparent 25%,transparent 75%,#353452 75%),linear-gradient(45deg,#353452 25%,transparent 25%,transparent 75%,#353452 75%);background-size:10px 10px;background-position:0 0,5px 5px"></div>
<div class="a" style="left:0;top:0;width:1.5px;height:1005px;background:#363552"></div>
<div class="a" style="left:1.5px;top:0;width:1.5px;height:1005px;background:#1f1e36"></div>
<div class="a" style="left:1997.5px;top:0;width:1.5px;height:1005px;background:#353450"></div>
</div></body></html>
